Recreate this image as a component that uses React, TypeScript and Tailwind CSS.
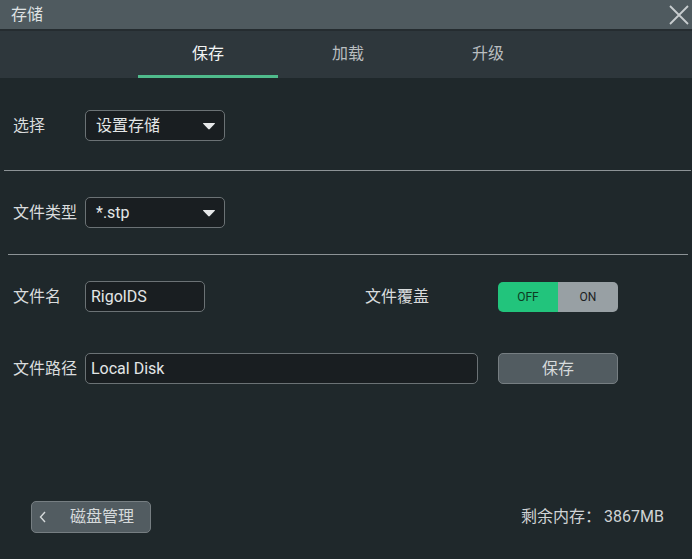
import React from "react";

const font = { fontFamily: "Roboto, 'Noto Sans CJK SC', sans-serif" };

function Caret() {
  return (
    <svg width="14" height="8" viewBox="0 0 14 8" className="shrink-0">
      <path d="M1.5 1 L12.5 1 Q13.5 1 12.8 1.8 L7.8 7 Q7 7.8 6.2 7 L1.2 1.8 Q0.5 1 1.5 1 Z" fill="#e6e8e9" />
    </svg>
  );
}

function Select({ value }: { value: string }) {
  return (
    <div className="w-[140px] h-[31px] rounded-[5px] border border-[#6b7275] bg-[#191e21] flex items-center justify-between pl-[10px] pr-[8px] text-[16px] text-[#e3e6e7]">
      <span>{value}</span>
      <Caret />
    </div>
  );
}

export default function App() {
  return (
    <div style={font} className="w-[692px] h-[559px] flex flex-col bg-[#1f282b] text-[#d9dcdd] overflow-hidden">
      {/* Title bar */}
      <div className="h-[29px] bg-[#4f5a5f] flex items-center justify-between pl-[11px] pr-[3px] shrink-0">
        <span className="text-[16px] text-[#dfe2e3] mt-[1px]">存储</span>
        <svg width="20" height="20" viewBox="0 0 20 20">
          <path d="M1 1 L19 19 M19 1 L1 19" stroke="#c8cdcf" strokeWidth="1.8" />
        </svg>
      </div>
      <div className="h-[2px] bg-[#252c30] shrink-0" />
      {/* Tabs */}
      <div className="h-[47px] bg-[#2e373c] flex pl-[138px] shrink-0">
        <div className="w-[140px] flex flex-col">
          <div className="flex-1 flex items-center justify-center text-[16px] text-[#f2f4f4] pt-[1px]">保存</div>
          <div className="h-[3px] bg-[#4fbb8c]" />
        </div>
        <div className="w-[140px] flex items-center justify-center text-[16px] text-[#b9bec0] pb-[2px]">加载</div>
        <div className="w-[140px] flex items-center justify-center text-[16px] text-[#b9bec0] pb-[2px]">升级</div>
      </div>

      {/* Body */}
      <div className="flex-1 flex flex-col">
        <div className="flex items-center h-[31px] mt-[32px] pl-[13px]">
          <span className="w-[72px] text-[16px]">选择</span>
          <Select value="设置存储" />
        </div>
        <div className="h-[1px] bg-[#8c9396] mt-[29px] ml-[4px] mr-[1px]" />
        <div className="flex items-center h-[31px] mt-[26px] pl-[13px]">
          <span className="w-[72px] text-[16px]">文件类型</span>
          <Select value="*.stp" />
        </div>
        <div className="h-[1px] bg-[#8c9396] mt-[26px] ml-[8px] mr-[4px]" />
        <div className="flex items-center h-[31px] mt-[26px] pl-[13px]">
          <span className="w-[72px] text-[16px]">文件名</span>
          <div className="w-[120px] h-[31px] rounded-[5px] border border-[#6b7275] bg-[#191e21] flex items-center pl-[5px] text-[16px] text-[#e3e6e7]">
            RigolDS
          </div>
          <span className="ml-[160px] w-[133px] text-[16px]">文件覆盖</span>
          <div className="w-[120px] h-[30px] rounded-[5px] overflow-hidden flex text-[12px]">
            <div className="w-[60px] bg-[#22c47c] flex items-center justify-center text-[#0e3a22]">OFF</div>
            <div className="w-[60px] bg-[#98a0a4] flex items-center justify-center text-[#1c2022]">ON</div>
          </div>
        </div>
        <div className="flex items-center h-[31px] mt-[41px] pl-[13px]">
          <span className="w-[72px] text-[16px]">文件路径</span>
          <div className="w-[393px] h-[31px] rounded-[5px] border border-[#6b7275] bg-[#191e21] flex items-center pl-[5px] text-[16px] text-[#e3e6e7]">
            Local Disk
          </div>
          <div className="ml-[20px] w-[120px] h-[31px] rounded-[5px] border border-[#767e82] bg-[#525c61] flex items-center justify-center text-[16px] text-[#d6dadb]">
            保存
          </div>
        </div>

        <div className="mt-auto mb-[26px] flex items-center justify-between pl-[31px] pr-[28px]">
          <div className="w-[120px] h-[32px] rounded-[5px] border border-[#767e82] bg-[#525c61] flex items-center pl-[7px] text-[16px] text-[#d6dadb]">
            <svg width="8" height="12" viewBox="0 0 8 12" className="shrink-0">
              <path d="M6 1 L1.5 6 L6 11" stroke="#d6dadb" strokeWidth="1.4" fill="none" />
            </svg>
            <span className="ml-[23px]">磁盘管理</span>
          </div>
          <span className="text-[16px] text-[#cfd3d5]">剩余内存：<span className="ml-[3px]">3867MB</span></span>
        </div>
      </div>
    </div>
  );
}
